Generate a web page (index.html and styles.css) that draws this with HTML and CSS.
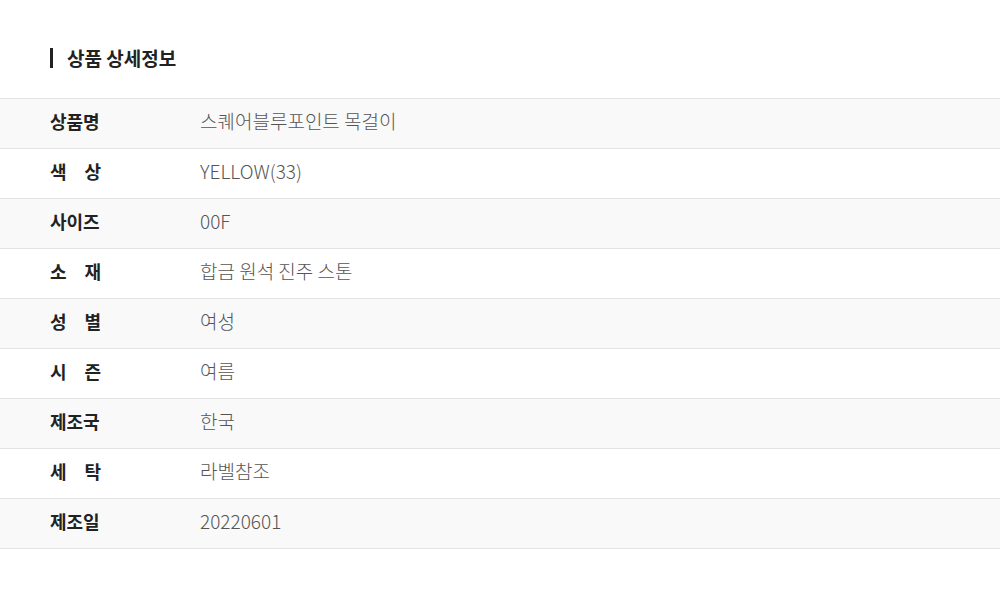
FILE: index.html
```html
<!DOCTYPE html>
<html>
<head>
    <title>상품 상세정보</title>
    <link rel="stylesheet" href="styles.css">
</head>
<body>
    <h2 class="section-title">상품 상세정보</h2>

    <table class="detail-table">
        <tr><th><span class="label">상품명</span></th><td>스퀘어블루포인트 목걸이</td></tr>
        <tr><th><span class="label">색 상</span></th><td>YELLOW(33)</td></tr>
        <tr><th><span class="label">사이즈</span></th><td>00F</td></tr>
        <tr><th><span class="label">소 재</span></th><td>합금 원석 진주 스톤</td></tr>
        <tr><th><span class="label">성 별</span></th><td>여성</td></tr>
        <tr><th><span class="label">시 즌</span></th><td>여름</td></tr>
        <tr><th><span class="label">제조국</span></th><td>한국</td></tr>
        <tr><th><span class="label">세 탁</span></th><td>라벨참조</td></tr>
        <tr><th><span class="label">제조일</span></th><td>20220601</td></tr>
    </table>
</body>
</html>
```

FILE: styles.css
```css
body {
    margin: 0;
    font-family: "Noto Sans CJK KR", "Noto Sans", sans-serif;
    background: #fff;
    color: #222;
}

.section-title {
    margin: 48px 0 30px 50px;
    padding-left: 14px;
    border-left: 3px solid #222;
    font-size: 19px;
    font-weight: bold;
    line-height: 20px;
    height: 20px;
    color: #222;
}

.detail-table {
    width: 100%;
    border-collapse: collapse;
    border-top: 1px solid #e3e3e3;
}

.detail-table tr {
    height: 50px;
}

.detail-table tr:nth-child(odd) {
    background: #f9f9f9;
}

.detail-table th,
.detail-table td {
    padding: 0 0 6px;
    border-bottom: 1px solid #e3e3e3;
    text-align: left;
    vertical-align: middle;
    line-height: 24px;
}

.detail-table th {
    width: 150px;
    padding-left: 50px;
    font-size: 18px;
    font-weight: bold;
    color: #222;
}

.label {
    display: inline-block;
    width: 51px;
    text-align: justify;
    text-align-last: justify;
}

.detail-table td {
    font-size: 19px;
    color: #555;
    font-weight: 300;
}
```
